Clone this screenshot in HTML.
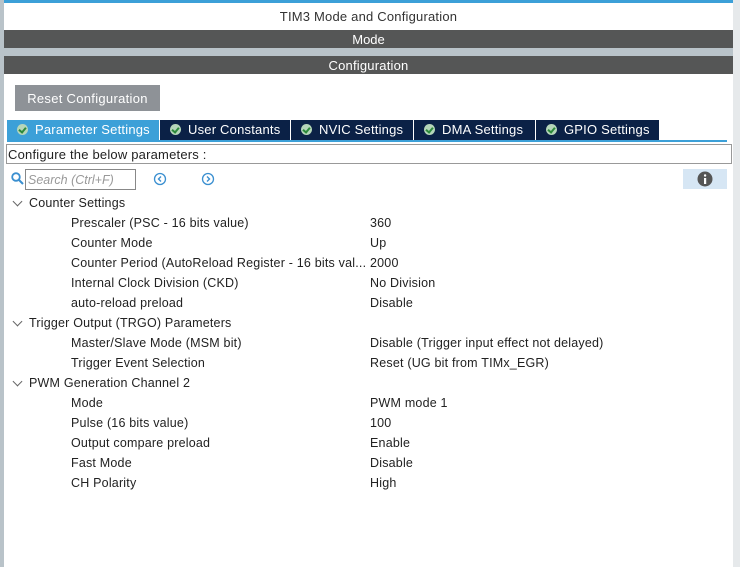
<!DOCTYPE html>
<html><head><style>
body{margin:0;width:740px;height:567px;background:#fff;font-family:"Liberation Sans",sans-serif;position:relative;overflow:hidden;color:#222}
.a{position:absolute}
.bar{position:absolute;left:4px;width:729px;height:18px;background:#555656;color:#fff;font-size:13px;text-align:center;line-height:19px}
.tab{position:absolute;top:120px;height:20px;background:#0b2146;color:#fff;font-size:13px;line-height:20px;box-sizing:border-box;padding-left:10px;white-space:nowrap;letter-spacing:0.2px}
.tab i{display:inline-block;width:11px;height:11px;border-radius:50%;background:#b5d6b9;vertical-align:-1px;margin-right:7px;position:relative}
.tab i:after{content:"";position:absolute;left:3px;top:2px;width:3px;height:5px;border:solid #2c8a3b;border-width:0 2px 2px 0;transform:rotate(40deg)}
.r{position:absolute;font-size:12.5px;height:20px;line-height:21px;white-space:nowrap;letter-spacing:0.2px}
.chev{position:absolute;width:6px;height:6px;border:solid #666;border-width:0 1px 1px 0;transform:rotate(45deg)}
</style></head><body>
<div class="a" style="left:0;top:0;width:740px;height:3px;background:#3ca0d8"></div>
<div class="a" style="left:0;top:0;width:4px;height:567px;background:#b9c3c9"></div>
<div class="a" style="left:733px;top:0;width:7px;height:567px;background:#e6e9eb"></div>
<div class="a" style="left:4px;top:3px;width:729px;height:27px;line-height:28px;text-align:center;font-size:13px;color:#333;letter-spacing:0.2px">TIM3 Mode and Configuration</div>
<div class="bar" style="top:30px">Mode</div>
<div class="a" style="left:4px;top:48px;width:729px;height:8px;background:#b9c3c9"></div>
<div class="bar" style="top:56px;letter-spacing:0.2px">Configuration</div>
<div class="a" style="left:15px;top:85px;width:145px;height:26px;background:#8e9297;color:#fff;font-size:13px;line-height:27px;text-align:center;letter-spacing:0.3px">Reset Configuration</div>
<div class="tab" style="left:7px;width:152px;background:#3ca0d8"><i></i>Parameter Settings</div>
<div class="tab" style="left:160px;width:130px"><i></i>User Constants</div>
<div class="tab" style="left:291px;width:122px"><i></i>NVIC Settings</div>
<div class="tab" style="left:414px;width:121px"><i></i>DMA Settings</div>
<div class="tab" style="left:536px;width:123px"><i></i>GPIO Settings</div>
<div class="a" style="left:7px;top:140px;width:720px;height:2px;background:#3ca0d8"></div>
<div class="a" style="left:6px;top:144px;height:18px;border:1px solid #999;font-size:13px;line-height:20px;padding-left:1px;width:723px;letter-spacing:0.2px">Configure the below parameters :</div>
<svg class="a" style="left:11px;top:172px" width="13" height="13"><circle cx="5" cy="5" r="3.8" fill="none" stroke="#3a8fd0" stroke-width="1.8"/><line x1="8" y1="8" x2="12" y2="12" stroke="#3a8fd0" stroke-width="2"/></svg>
<div class="a" style="left:25px;top:169px;border:1px solid #888;font-size:12.5px;line-height:20px;color:#999;font-style:italic;padding-left:2px;box-sizing:border-box;width:111px;height:21px">Search (Ctrl+F)</div>
<svg class="a" style="left:153px;top:172px" width="14" height="14"><circle cx="7" cy="7" r="5.5" fill="none" stroke="#3a8fd0" stroke-width="1.3"/><path d="M8 4.5L5.5 7L8 9.5" fill="none" stroke="#3a8fd0" stroke-width="1.4"/></svg>
<svg class="a" style="left:201px;top:172px" width="14" height="14"><circle cx="7" cy="7" r="5.5" fill="none" stroke="#3a8fd0" stroke-width="1.3"/><path d="M6 4.5L8.5 7L6 9.5" fill="none" stroke="#3a8fd0" stroke-width="1.4"/></svg>
<div class="a" style="left:683px;top:169px;width:44px;height:20px;background:#d6e6f4"></div>
<svg class="a" style="left:697px;top:171px" width="16" height="16"><circle cx="8" cy="8" r="7.5" fill="#555"/><rect x="7" y="7" width="2.2" height="6" fill="#fff"/><circle cx="8.1" cy="4.5" r="1.2" fill="#fff"/></svg>

<div class="chev" style="left:14px;top:198px"></div><div class="r" style="left:29px;top:193px">Counter Settings</div>
<div class="r" style="left:71px;top:213px">Prescaler (PSC - 16 bits value)</div><div class="r" style="left:370px;top:213px">360</div>
<div class="r" style="left:71px;top:233px">Counter Mode</div><div class="r" style="left:370px;top:233px">Up</div>
<div class="r" style="left:71px;top:253px">Counter Period (AutoReload Register - 16 bits val...</div><div class="r" style="left:370px;top:253px">2000</div>
<div class="r" style="left:71px;top:273px">Internal Clock Division (CKD)</div><div class="r" style="left:370px;top:273px">No Division</div>
<div class="r" style="left:71px;top:293px">auto-reload preload</div><div class="r" style="left:370px;top:293px">Disable</div>
<div class="chev" style="left:14px;top:318px"></div><div class="r" style="left:29px;top:313px">Trigger Output (TRGO) Parameters</div>
<div class="r" style="left:71px;top:333px">Master/Slave Mode (MSM bit)</div><div class="r" style="left:370px;top:333px">Disable (Trigger input effect not delayed)</div>
<div class="r" style="left:71px;top:353px">Trigger Event Selection</div><div class="r" style="left:370px;top:353px">Reset (UG bit from TIMx_EGR)</div>
<div class="chev" style="left:14px;top:378px"></div><div class="r" style="left:29px;top:373px">PWM Generation Channel 2</div>
<div class="r" style="left:71px;top:393px">Mode</div><div class="r" style="left:370px;top:393px">PWM mode 1</div>
<div class="r" style="left:71px;top:413px">Pulse (16 bits value)</div><div class="r" style="left:370px;top:413px">100</div>
<div class="r" style="left:71px;top:433px">Output compare preload</div><div class="r" style="left:370px;top:433px">Enable</div>
<div class="r" style="left:71px;top:453px">Fast Mode</div><div class="r" style="left:370px;top:453px">Disable</div>
<div class="r" style="left:71px;top:473px">CH Polarity</div><div class="r" style="left:370px;top:473px">High</div>
</body></html>
